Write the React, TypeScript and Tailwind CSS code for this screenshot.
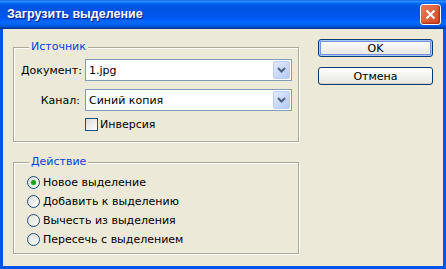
import React from 'react';

const ui = { fontFamily: '"DejaVu Sans", Verdana, sans-serif' };

function Chevron() {
  return (
    <svg width="9" height="6" viewBox="0 0 9 6" className="block">
      <path d="M1 1 L4.5 4.5 L8 1" fill="none" stroke="#4d6185" strokeWidth="2" />
    </svg>
  );
}

function Select({ value }: { value: string }) {
  return (
    <div className="flex h-[22px] w-[207px] items-center border border-[#7f9db9] bg-white">
      <span className="flex-1 pl-[3px] text-[11px] leading-none text-black">{value}</span>
      <div className="mr-[1px] flex h-[18px] w-[17px] items-center justify-center rounded-[2px] border border-[#b9cdf5] bg-gradient-to-br from-[#e3ebfd] to-[#b3c9f7]">
        <Chevron />
      </div>
    </div>
  );
}

function Group({ title, children, className }: { title: string; children: React.ReactNode; className?: string }) {
  return (
    <div className={`relative border border-[#aca899] shadow-[inset_1px_1px_0_#fff,1px_1px_0_#fff] ${className ?? ''}`}>
      <span className="absolute left-[15px] top-[-8px] bg-[#ece9d8] px-[2px] text-[11px] leading-[14px] text-[#0046d5]">
        {title}
      </span>
      {children}
    </div>
  );
}

function Radio({ checked, label }: { checked?: boolean; label: string }) {
  return (
    <div className="flex h-[19px] items-center gap-[3px]">
      <div className="flex h-[13px] w-[13px] items-center justify-center rounded-full border border-[#1c5180] bg-gradient-to-br from-[#dcdcd7] to-white">
        {checked && <div className="h-[5px] w-[5px] rounded-full bg-[#21a121] shadow-[0_0_1px_#5fd35f]" />}
      </div>
      <span className="text-[11px] leading-none text-black">{label}</span>
    </div>
  );
}

function Button({ label, primary }: { label: string; primary?: boolean }) {
  return (
    <div
      className={`flex h-[18px] w-[115px] items-center justify-center rounded-[3px] border border-[#003c74] bg-gradient-to-b from-white to-[#e6e5de] text-[11px] leading-none text-black ${
        primary ? 'shadow-[inset_0_0_0_1px_#aec6f2,inset_0_0_0_2px_#6f95e0]' : 'shadow-[inset_0_-1px_0_#d6d0c5]'
      }`}
    >
      {label}
    </div>
  );
}

export default function App() {
  return (
    <div className="flex h-[269px] w-[446px] flex-col overflow-hidden bg-[#0055ea]" style={ui}>
      {/* title bar */}
      <div className="flex h-[29px] items-center justify-between bg-[linear-gradient(to_bottom,#0058ee_0%,#3593ff_4%,#288eff_6%,#127dff_8%,#036ffc_10%,#0262ee_14%,#0057e5_20%,#0054e3_24%,#0055eb_56%,#005bf5_66%,#026afe_76%,#0062ef_86%,#0052d6_92%,#0040ab_96%,#003092_100%)] pl-[7px] pr-[5px]">
        <span
          className="text-[12.5px] font-bold leading-none text-white [text-shadow:1px_1px_0_#0a1883]"
          style={{ fontFamily: '"Liberation Sans", Arial, sans-serif' }}
        >
          Загрузить выделение
        </span>
        <div className="flex h-[21px] w-[21px] items-center justify-center rounded-[3px] border border-white bg-gradient-to-br from-[#e87a5a] to-[#d4461e] shadow-[inset_-1px_-1px_2px_#a52a10]">
          <svg width="11" height="11" viewBox="0 0 11 11">
            <path d="M1.5 1.5 L9.5 9.5 M9.5 1.5 L1.5 9.5" stroke="#fff" strokeWidth="2" />
          </svg>
        </div>
      </div>

      {/* body */}
      <div className="mx-[3px] mb-[3px] flex flex-1 bg-[#ece9d8]">
        <div className="flex w-[296px] flex-col gap-[20px] pl-[10px] pt-[18px]">
          <Group title="Источник" className="h-[95px]">
            <div className="grid grid-cols-[59px_207px] items-center gap-x-[5px] gap-y-[8px] pl-[7px] pt-[11px]">
              <span className="text-right text-[11px] leading-none text-black">Документ:</span>
              <Select value="1.jpg" />
              <span className="text-right text-[11px] leading-none text-black">Канал:</span>
              <Select value="Синий копия" />
              <span />
              <div className="mt-[-1px] flex items-center gap-[2px]">
                <div className="h-[13px] w-[13px] border border-[#1c5180] bg-gradient-to-br from-[#dcdcd7] to-white" />
                <span className="text-[11px] leading-none text-black">Инверсия</span>
              </div>
            </div>
          </Group>
          <Group title="Действие" className="h-[92px]">
            <div className="flex flex-col pl-[13px] pt-[10px]">
              <Radio checked label="Новое выделение" />
              <Radio label="Добавить к выделению" />
              <Radio label="Вычесть из выделения" />
              <Radio label="Пересечь с выделением" />
            </div>
          </Group>
        </div>
        <div className="flex flex-col gap-[10px] pl-[19px] pt-[10px]">
          <Button label="OK" primary />
          <Button label="Отмена" />
        </div>
      </div>
    </div>
  );
}
